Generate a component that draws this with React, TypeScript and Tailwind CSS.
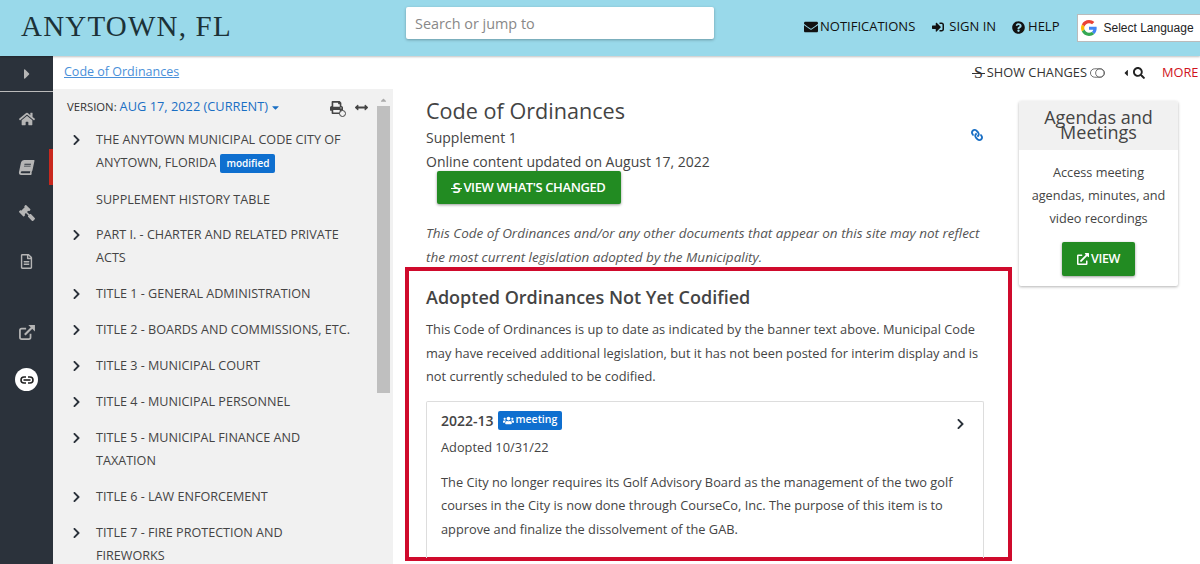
import {
  FaArrowsAltH,
  FaBook,
  FaCaretDown,
  FaCaretLeft,
  FaCaretRight,
  FaChevronRight,
  FaEnvelope,
  FaExternalLinkAlt,
  FaGavel,
  FaHome,
  FaLink,
  FaPrint,
  FaQuestionCircle,
  FaRegFileAlt,
  FaSearch,
  FaSignInAlt,
  FaUsers,
} from 'react-icons/fa';

const tree = [
  'PART I. - CHARTER AND RELATED PRIVATE ACTS',
  'TITLE 1 - GENERAL ADMINISTRATION',
  'TITLE 2 - BOARDS AND COMMISSIONS, ETC.',
  'TITLE 3 - MUNICIPAL COURT',
  'TITLE 4 - MUNICIPAL PERSONNEL',
  'TITLE 5 - MUNICIPAL FINANCE AND TAXATION',
  'TITLE 6 - LAW ENFORCEMENT',
  'TITLE 7 - FIRE PROTECTION AND FIREWORKS',
];

function StrikeS({ className }: { className?: string }) {
  return (
    <span className={`relative inline-block ${className ?? ''}`}>
      S
      <span className="absolute left-[-2px] right-[-2px] top-1/2 h-px bg-current" />
    </span>
  );
}

function GoogleG() {
  return (
    <svg viewBox="0 0 48 48" className="h-[16px] w-[16px] shrink-0">
      <path fill="#EA4335" d="M24 9.5c3.5 0 6.7 1.2 9.2 3.6l6.9-6.9C35.9 2.4 30.5 0 24 0 14.6 0 6.5 5.4 2.6 13.2l8 6.2C12.5 13.7 17.8 9.5 24 9.5z" />
      <path fill="#4285F4" d="M47 24.5c0-1.6-.1-3.1-.4-4.5H24v9h12.9c-.6 3-2.2 5.5-4.8 7.2l7.7 6c4.5-4.2 7.2-10.3 7.2-17.7z" />
      <path fill="#FBBC05" d="M10.6 28.6c-.5-1.4-.8-3-.8-4.6s.3-3.2.8-4.6l-8-6.2C.9 16.5 0 20.1 0 24s.9 7.5 2.6 10.8l8-6.2z" />
      <path fill="#34A853" d="M24 48c6.5 0 11.9-2.1 15.9-5.8l-7.7-6c-2.1 1.4-4.9 2.3-8.2 2.3-6.2 0-11.5-4.2-13.4-9.9l-8 6.2C6.5 42.6 14.6 48 24 48z" />
    </svg>
  );
}

function OutlinedExternal() {
  return (
    <svg viewBox="0 0 18 17" className="mt-[56px] h-[15px] w-[16px]" fill="none" stroke="currentColor">
      <path strokeWidth="2" d="M13 10v4a2 2 0 0 1-2 2H3a2 2 0 0 1-2-2V6a2 2 0 0 1 2-2h5" />
      <path strokeWidth="2.4" d="M6.5 11 15 2.5" />
      <path fill="currentColor" stroke="none" d="M10.5 0H18v7.5z" />
    </svg>
  );
}

function LinkBadge() {
  return (
    <svg viewBox="0 0 14 8" className="h-[8px] w-[14px]" fill="none" stroke="#222" strokeWidth="1.6">
      <path d="M6 1H4a3 3 0 0 0 0 6h2" />
      <path d="M8 1h2a3 3 0 0 1 0 6H8" />
      <path d="M3.5 4h7" />
    </svg>
  );
}

export default function App() {
  return (
    <div className="flex h-[564px] w-[1200px] flex-col overflow-hidden bg-white font-['Open_Sans',sans-serif] text-[12.8px] text-[#444]">
      <header className="relative z-10 flex h-[56px] shrink-0 items-center bg-[#99d9ea] shadow-[0_1px_2px_rgba(0,0,0,0.25)]">
        <div className="w-[406px] shrink-0 pb-[4px] pl-[21px] font-['Liberation_Serif',serif] text-[29px] leading-none tracking-[1.2px] text-[#1c3238]">
          ANYTOWN, FL
        </div>
        <div className="mb-[10px] flex h-[32px] w-[308px] shrink-0 items-center rounded-[2px] bg-white pl-[9px] pt-[1px] text-[14.4px] text-[#888] shadow-[0_1px_3px_rgba(0,0,0,0.3)]">
          Search or jump to
        </div>
        <nav className="mb-[2px] ml-[90px] flex shrink-0 items-center whitespace-nowrap text-[13px] text-[#111]">
          <span className="flex items-center gap-[2px]">
            <FaEnvelope className="text-[14px]" />
            NOTIFICATIONS
          </span>
          <span className="ml-[17px] flex items-center gap-[5px]">
            <FaSignInAlt className="text-[12px]" />
            SIGN IN
          </span>
          <span className="ml-[16px] flex items-center gap-[3px]">
            <FaQuestionCircle className="text-[13px]" />
            HELP
          </span>
        </nav>
        <div className="ml-[18px] flex h-[28px] w-[140px] shrink-0 items-center gap-[6px] border border-[#bbb] bg-white pl-[3px] font-['Liberation_Sans',sans-serif] text-[12px] text-[#222]">
          <GoogleG />
          <span>Select Language</span>
          <span className="ml-[1px] h-[14px] w-px bg-[#ccc]" />
        </div>
      </header>

      <div className="flex min-h-0 flex-1">
        <aside className="flex w-[53px] shrink-0 flex-col items-center bg-[#2b323b] text-[#b5b5b5]">
          <div className="flex h-[36px] w-full items-center justify-center border-b border-[#bbb]">
            <FaCaretRight className="text-[16px]" />
          </div>
          <FaHome className="mt-[19px] text-[16px]" />
          <div className="mt-[22px] flex h-[36px] w-full items-center justify-center border-r-[4px] border-[#c9281e] pl-[4px]">
            <FaBook className="skew-x-[-12deg] text-[15px]" />
          </div>
          <FaGavel className="mt-[20px] -scale-x-100 text-[16px]" />
          <FaRegFileAlt className="mt-[33px] text-[15px]" />
          <OutlinedExternal />
          <div className="mt-[28px] flex h-[23px] w-[23px] items-center justify-center rounded-full bg-white">
            <LinkBadge />
          </div>
        </aside>

        <div className="flex min-w-0 flex-1 flex-col">
          <div className="flex h-[33px] shrink-0 items-center bg-white pl-[11px] text-[12.5px]">
            <a className="text-[#4a90d9] underline">Code of Ordinances</a>
            <div className="ml-auto flex items-center text-[12.8px] text-[#333]">
              <StrikeS className="mr-[4px] font-['Liberation_Serif',serif] text-[16px] leading-none" />
              SHOW CHANGES
              <svg viewBox="0 0 16 10" className="ml-[3px] h-[10px] w-[15px]" fill="none" stroke="#666">
                <rect x="0.5" y="0.5" width="15" height="9" rx="4.5" />
                <circle cx="10.5" cy="5" r="4.5" />
              </svg>
              <FaCaretLeft className="ml-[16px] text-[10px] text-[#222]" />
              <FaSearch className="ml-[2px] text-[12px] text-[#222]" />
              <span className="ml-[17px] w-[38px] text-[#d0141c]">MORE</span>
            </div>
          </div>

          <div className="flex min-h-0 flex-1">
            <section className="relative flex w-[340px] shrink-0 bg-[#f1f1f1]">
              <div className="min-w-0 flex-1">
                <div className="flex h-[36px] items-center pl-[14px] pr-[9px]">
                  <span className="text-[11.3px] text-[#333]">VERSION:</span>
                  <span className="ml-[3px] text-[12.8px] text-[#1a6fc4]">AUG 17, 2022 (CURRENT)</span>
                  <FaCaretDown className="ml-[2px] text-[11px] text-[#1a6fc4]" />
                  <span className="relative ml-auto">
                    <FaPrint className="text-[13px] text-[#444]" />
                    <span className="absolute bottom-[-3px] right-[-3px] h-[7px] w-[7px] rounded-full border border-[#444] bg-[#f1f1f1]" />
                  </span>
                  <FaArrowsAltH className="ml-[12px] text-[13px] text-[#444]" />
                </div>
                <div className="pl-[19px] pr-[24px] pt-[3px] text-[12.6px] leading-[23px] text-[#444]">
                  <div className="flex pb-[14px]">
                    <FaChevronRight className="mt-[6px] h-[12px] w-[9px] shrink-0 text-[#2b323b]" />
                    <span className="ml-[15px]">
                      THE ANYTOWN MUNICIPAL CODE CITY OF ANYTOWN, FLORIDA{' '}
                      <span className="ml-px inline-block rounded-[2px] bg-[#0f6fcf] px-[6px] align-middle text-[10px] font-semibold leading-[19px] text-white">
                        modified
                      </span>
                    </span>
                  </div>
                  <div className="pb-[12px] pl-[24px]">SUPPLEMENT HISTORY TABLE</div>
                  {tree.map((title) => (
                    <div key={title} className="flex pb-[13px]">
                      <FaChevronRight className="mt-[6px] h-[12px] w-[9px] shrink-0 text-[#2b323b]" />
                      <span className="ml-[15px]">{title}</span>
                    </div>
                  ))}
                </div>
              </div>
              <div className="mr-[3px] flex w-[13px] shrink-0 flex-col items-center">
                <FaCaretDown className="mt-[7px] h-[9px] w-[9px] rotate-180 text-[#aaa]" />
                <div className="mt-[1px] h-[287px] w-full bg-[#bfbfbf]" />
              </div>
            </section>

            <main className="flex min-w-0 flex-1">
              <div className="w-[625px] shrink-0 pl-[33px] pr-[34px]">
                <h1 className="pt-[7px] text-[21.6px] leading-[30px] text-[#444]">Code of Ordinances</h1>
                <div className="relative">
                  <p className="text-[14px] leading-[24px]">Supplement 1</p>
                  <p className="text-[14px] leading-[24px]">Online content updated on August 17, 2022</p>
                  <FaLink className="absolute right-[1px] top-[3px] -scale-x-100 text-[12px] text-[#1a6fc4]" />
                </div>
                <button className="relative ml-[11px] mt-[-3px] flex h-[33px] w-[184px] items-center justify-center rounded-[2px] bg-[#228b22] text-[13px] font-semibold tracking-[-0.4px] text-white shadow-[0_1px_3px_rgba(0,0,0,0.4)]">
                  <StrikeS className="mr-[3px] text-[15px] leading-none" />
                  VIEW WHAT'S CHANGED
                </button>
                <p className="mt-[17px] text-[13.5px] italic leading-[24px] text-[#555]">
                  This Code of Ordinances and/or any other documents that appear on this site may not reflect the most
                  current legislation adopted by the Municipality.
                </p>
                <div className="ml-[-21px] mr-[-28px] mt-[-2px] h-[294px] border-[4px] border-[#cf0a2c] pl-[17px] pr-[24px]">
                  <h2 className="mt-[14px] text-[18px] font-semibold leading-[24px] text-[#444]">
                    Adopted Ordinances Not Yet Codified
                  </h2>
                  <p className="mt-[9px] leading-[23.5px]">
                    This Code of Ordinances is up to date as indicated by the banner text above. Municipal Code may have
                    received additional legislation, but it has not been posted for interim display and is not currently
                    scheduled to be codified.
                  </p>
                  <div className="relative mt-[12px] h-[157px] rounded-t-[2px] border border-b-0 border-[#ddd] px-[14px] pt-[8px]">
                    <div className="flex items-center">
                      <span className="text-[14px] font-semibold text-[#444]">2022-13</span>
                      <span className="ml-[4px] flex h-[19px] items-center gap-[2px] rounded-[2px] bg-[#0f6fcf] px-[5px] text-[10.5px] font-semibold text-white">
                        <FaUsers className="text-[11px]" />
                        meeting
                      </span>
                    </div>
                    <FaChevronRight className="absolute right-[18px] top-[16px] h-[12px] w-[9px] text-[#2b323b]" />
                    <p className="mt-[4px] leading-[24px]">Adopted 10/31/22</p>
                    <p className="mt-[12px] leading-[23.5px]">
                      The City no longer requires its Golf Advisory Board as the management of the two golf courses in
                      the City is now done through CourseCo, Inc. The purpose of this item is to approve and finalize the
                      dissolvement of the GAB.
                    </p>
                  </div>
                </div>
              </div>

              <div className="ml-[1px] flex-1 pt-[12px]">
                <div className="h-[185px] w-[159px] rounded-[2px] bg-white shadow-[0_1px_3px_rgba(0,0,0,0.3)]">
                  <div className="h-[49px] rounded-t-[2px] bg-[#f1f1f1] pt-[9px] text-center text-[18px] leading-[15px] text-[#444]">
                    Agendas and Meetings
                  </div>
                  <p className="mt-[11px] px-[10px] text-center text-[12.7px] leading-[23px]">
                    Access meeting agendas, minutes, and video recordings
                  </p>
                  <button className="mx-auto mt-[12px] flex h-[34px] w-[73px] items-center justify-center gap-[2px] rounded-[2px] bg-[#228b22] text-[12.5px] font-semibold tracking-[-0.4px] text-white shadow-[0_1px_3px_rgba(0,0,0,0.4)]">
                    <FaExternalLinkAlt className="text-[12px]" />
                    VIEW
                  </button>
                </div>
              </div>
            </main>
          </div>
        </div>
      </div>
    </div>
  );
}
